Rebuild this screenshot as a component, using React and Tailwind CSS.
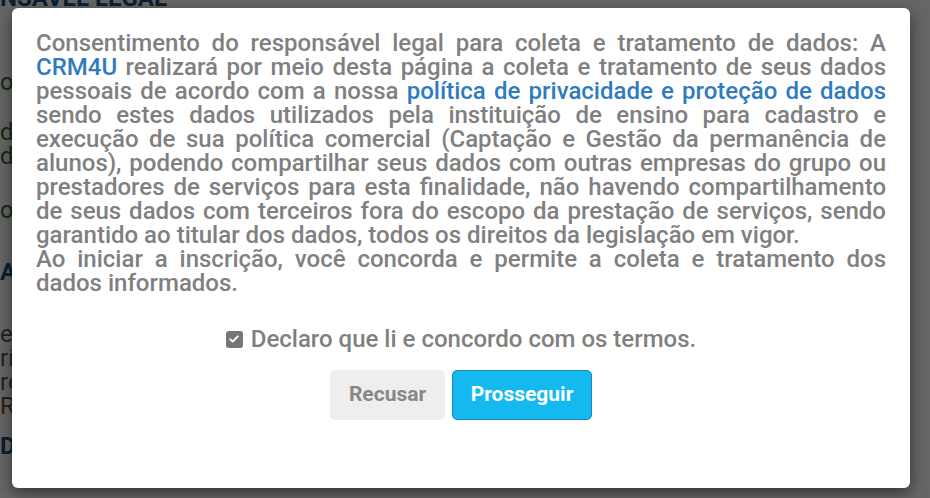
import React from 'react';

const lines = [
  { parts: ['Consentimento do responsável legal para coleta e tratamento de dados: A'], justify: true },
  { parts: [{ link: 'CRM4U' }, ' realizará por meio desta página a coleta e tratamento de seus dados'], justify: true },
  { parts: ['pessoais de acordo com a nossa ', { link: 'política de privacidade e proteção de dados' }], justify: true },
  { parts: ['sendo estes dados utilizados pela instituição de ensino para cadastro e'], justify: true },
  { parts: ['execução de sua política comercial (Captação e Gestão da permanência de'], justify: true },
  { parts: ['alunos), podendo compartilhar seus dados com outras empresas do grupo ou'], justify: true },
  { parts: ['prestadores de serviços para esta finalidade, não havendo compartilhamento'], justify: true },
  { parts: ['de seus dados com terceiros fora do escopo da prestação de serviços, sendo'], justify: true },
  { parts: ['garantido ao titular dos dados, todos os direitos da legislação em vigor.'], justify: false },
  { parts: ['Ao iniciar a inscrição, você concorda e permite a coleta e tratamento dos'], justify: true },
  { parts: ['dados informados.'], justify: false },
];

function BackgroundPage() {
  // page behind the modal, only its left edge peeks out
  return (
    <div className="flex flex-col text-[24px] leading-[24px]">
      <div className="-mt-[14px] text-[24px] font-bold text-[#1d4f80] whitespace-nowrap">NSÁVEL LEGAL</div>
      <div className="mt-[60px] text-[#2f6b2f]">oc</div>
      <div className="mt-[26px] text-[#2f6b2f]">de</div>
      <div className="text-[#2f6b2f]">de</div>
      <div className="mt-[30px] text-[#2f6b2f]">o</div>
      <div className="mt-[38px] font-bold text-[#1d4f80]">Al</div>
      <div className="mt-[38px] text-[#555]">e</div>
      <div className="text-[#555]">rí</div>
      <div className="text-[#555]">re</div>
      <div className="text-[#7a4a2a]">R</div>
      <div className="mt-[16px] font-bold text-[#1d4f80]">D</div>
    </div>
  );
}

export default function App() {
  return (
    <div className="relative h-[498px] w-[930px] overflow-hidden bg-white font-['Roboto',sans-serif]">
      <BackgroundPage />

      <div className="absolute inset-0 bg-black/60 pl-[12px] pt-[8px]">
        <div className="flex h-[480px] w-[898px] flex-col rounded-md bg-white px-6 pt-[23px] shadow-[0_5px_15px_rgba(0,0,0,0.5)]">
          <div className="text-[24px] font-medium leading-[24px] text-[#808080]">
            {lines.map((line, i) => (
              <div key={i} className={line.justify ? 'text-justify [text-align-last:justify]' : 'text-left'}>
                {line.parts.map((p, j) =>
                  typeof p === 'string' ? (
                    <span key={j}>{p}</span>
                  ) : (
                    <a key={j} className="text-[#2f7bbf]">{p.link}</a>
                  )
                )}
              </div>
            ))}
          </div>

          <label className="mt-[32px] flex items-center justify-center gap-2 text-[24px] font-medium leading-[24px] text-[#808080]">
            <span className="flex h-[17px] w-[17px] items-center justify-center rounded-[3px] bg-[#767676]">
              <svg viewBox="0 0 16 16" className="h-[12px] w-[12px]" fill="none" stroke="white" strokeWidth="2.6" strokeLinecap="round" strokeLinejoin="round">
                <path d="M3 8.5l3.2 3L13 4.5" />
              </svg>
            </span>
            Declaro que li e concordo com os termos.
          </label>

          <div className="mt-[19px] flex justify-center gap-[7px]">
            <button className="h-[50px] w-[115px] rounded-[5px] bg-[#eeeeee] text-[21px] font-bold text-[#888888]">
              Recusar
            </button>
            <button className="h-[50px] w-[140px] rounded-[5px] border border-[#1f86c2] bg-[#13b9ef] text-[21px] font-bold text-white">
              Prosseguir
            </button>
          </div>
        </div>
      </div>
    </div>
  );
}
